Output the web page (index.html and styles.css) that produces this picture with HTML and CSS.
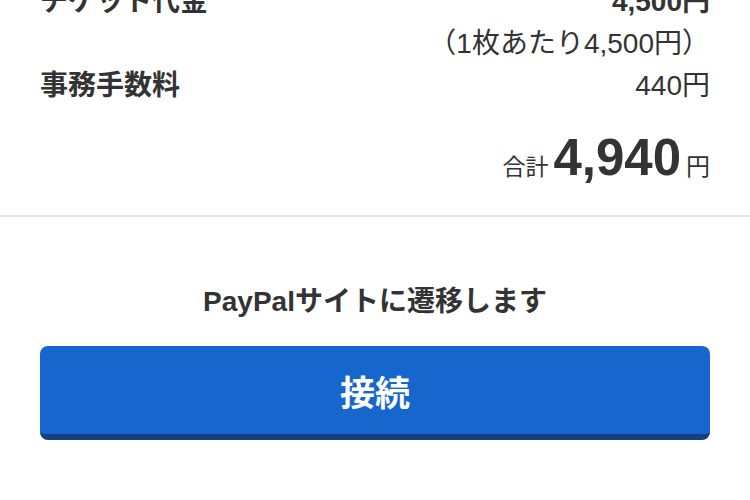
FILE: index.html
```html
<!DOCTYPE html>
<html lang="ja">
<head>
<meta charset="utf-8">
<link rel="stylesheet" href="styles.css">
</head>
<body>
<section class="summary">
  <div class="row">
    <span class="label">チケット代金</span>
    <span class="value strong">4,500円</span>
  </div>
  <div class="sub">（1枚あたり4,500円）</div>
  <div class="row">
    <span class="label">事務手数料</span>
    <span class="value">440円</span>
  </div>
  <div class="total">
    <span class="total-label">合計</span>
    <span class="total-num">4,940</span>
    <span class="total-unit">円</span>
  </div>
</section>
<section class="pay">
  <p class="notice">PayPalサイトに遷移します</p>
  <button class="connect" type="button">接続</button>
</section>
</body>
</html>
```

FILE: styles.css
```css
html, body {
  margin: 0;
  padding: 0;
  background: #fff;
}
body {
  font-family: "Liberation Sans", "Noto Sans CJK JP", sans-serif;
  color: #333;
  width: 750px;
  overflow: hidden;
}
.summary {
  margin-top: -19px;
  padding: 0 40px 20px;
  border-bottom: 2px solid #e6e6e6;
}
.row {
  display: flex;
  justify-content: space-between;
  align-items: center;
  font-size: 28px;
  line-height: 42px;
}
.label {
  font-weight: 700;
}
.value {
  font-weight: 400;
}
.value.strong {
  font-weight: 700;
}
.sub {
  text-align: right;
  font-size: 28px;
  line-height: 42px;
}
.total {
  display: flex;
  justify-content: flex-end;
  align-items: baseline;
  gap: 5px;
  margin-top: 23px;
  line-height: 56px;
}
.total-label {
  font-size: 23px;
}
.total-num {
  font-size: 51px;
  font-weight: 700;
}
.total-unit {
  font-size: 24px;
}
.pay {
  padding: 0 40px;
}
.notice {
  margin: 65px 0 0;
  text-align: center;
  font-size: 28px;
  font-weight: 700;
  line-height: 40px;
}
.connect {
  display: block;
  width: 100%;
  height: 94px;
  margin-top: 24px;
  border: 0;
  border-bottom: 6px solid #143f80;
  border-radius: 8px;
  background: #1766ce;
  color: #fff;
  font-family: "Noto Sans CJK JP", sans-serif;
  font-size: 35px;
  font-weight: 700;
  padding: 0;
}
```
